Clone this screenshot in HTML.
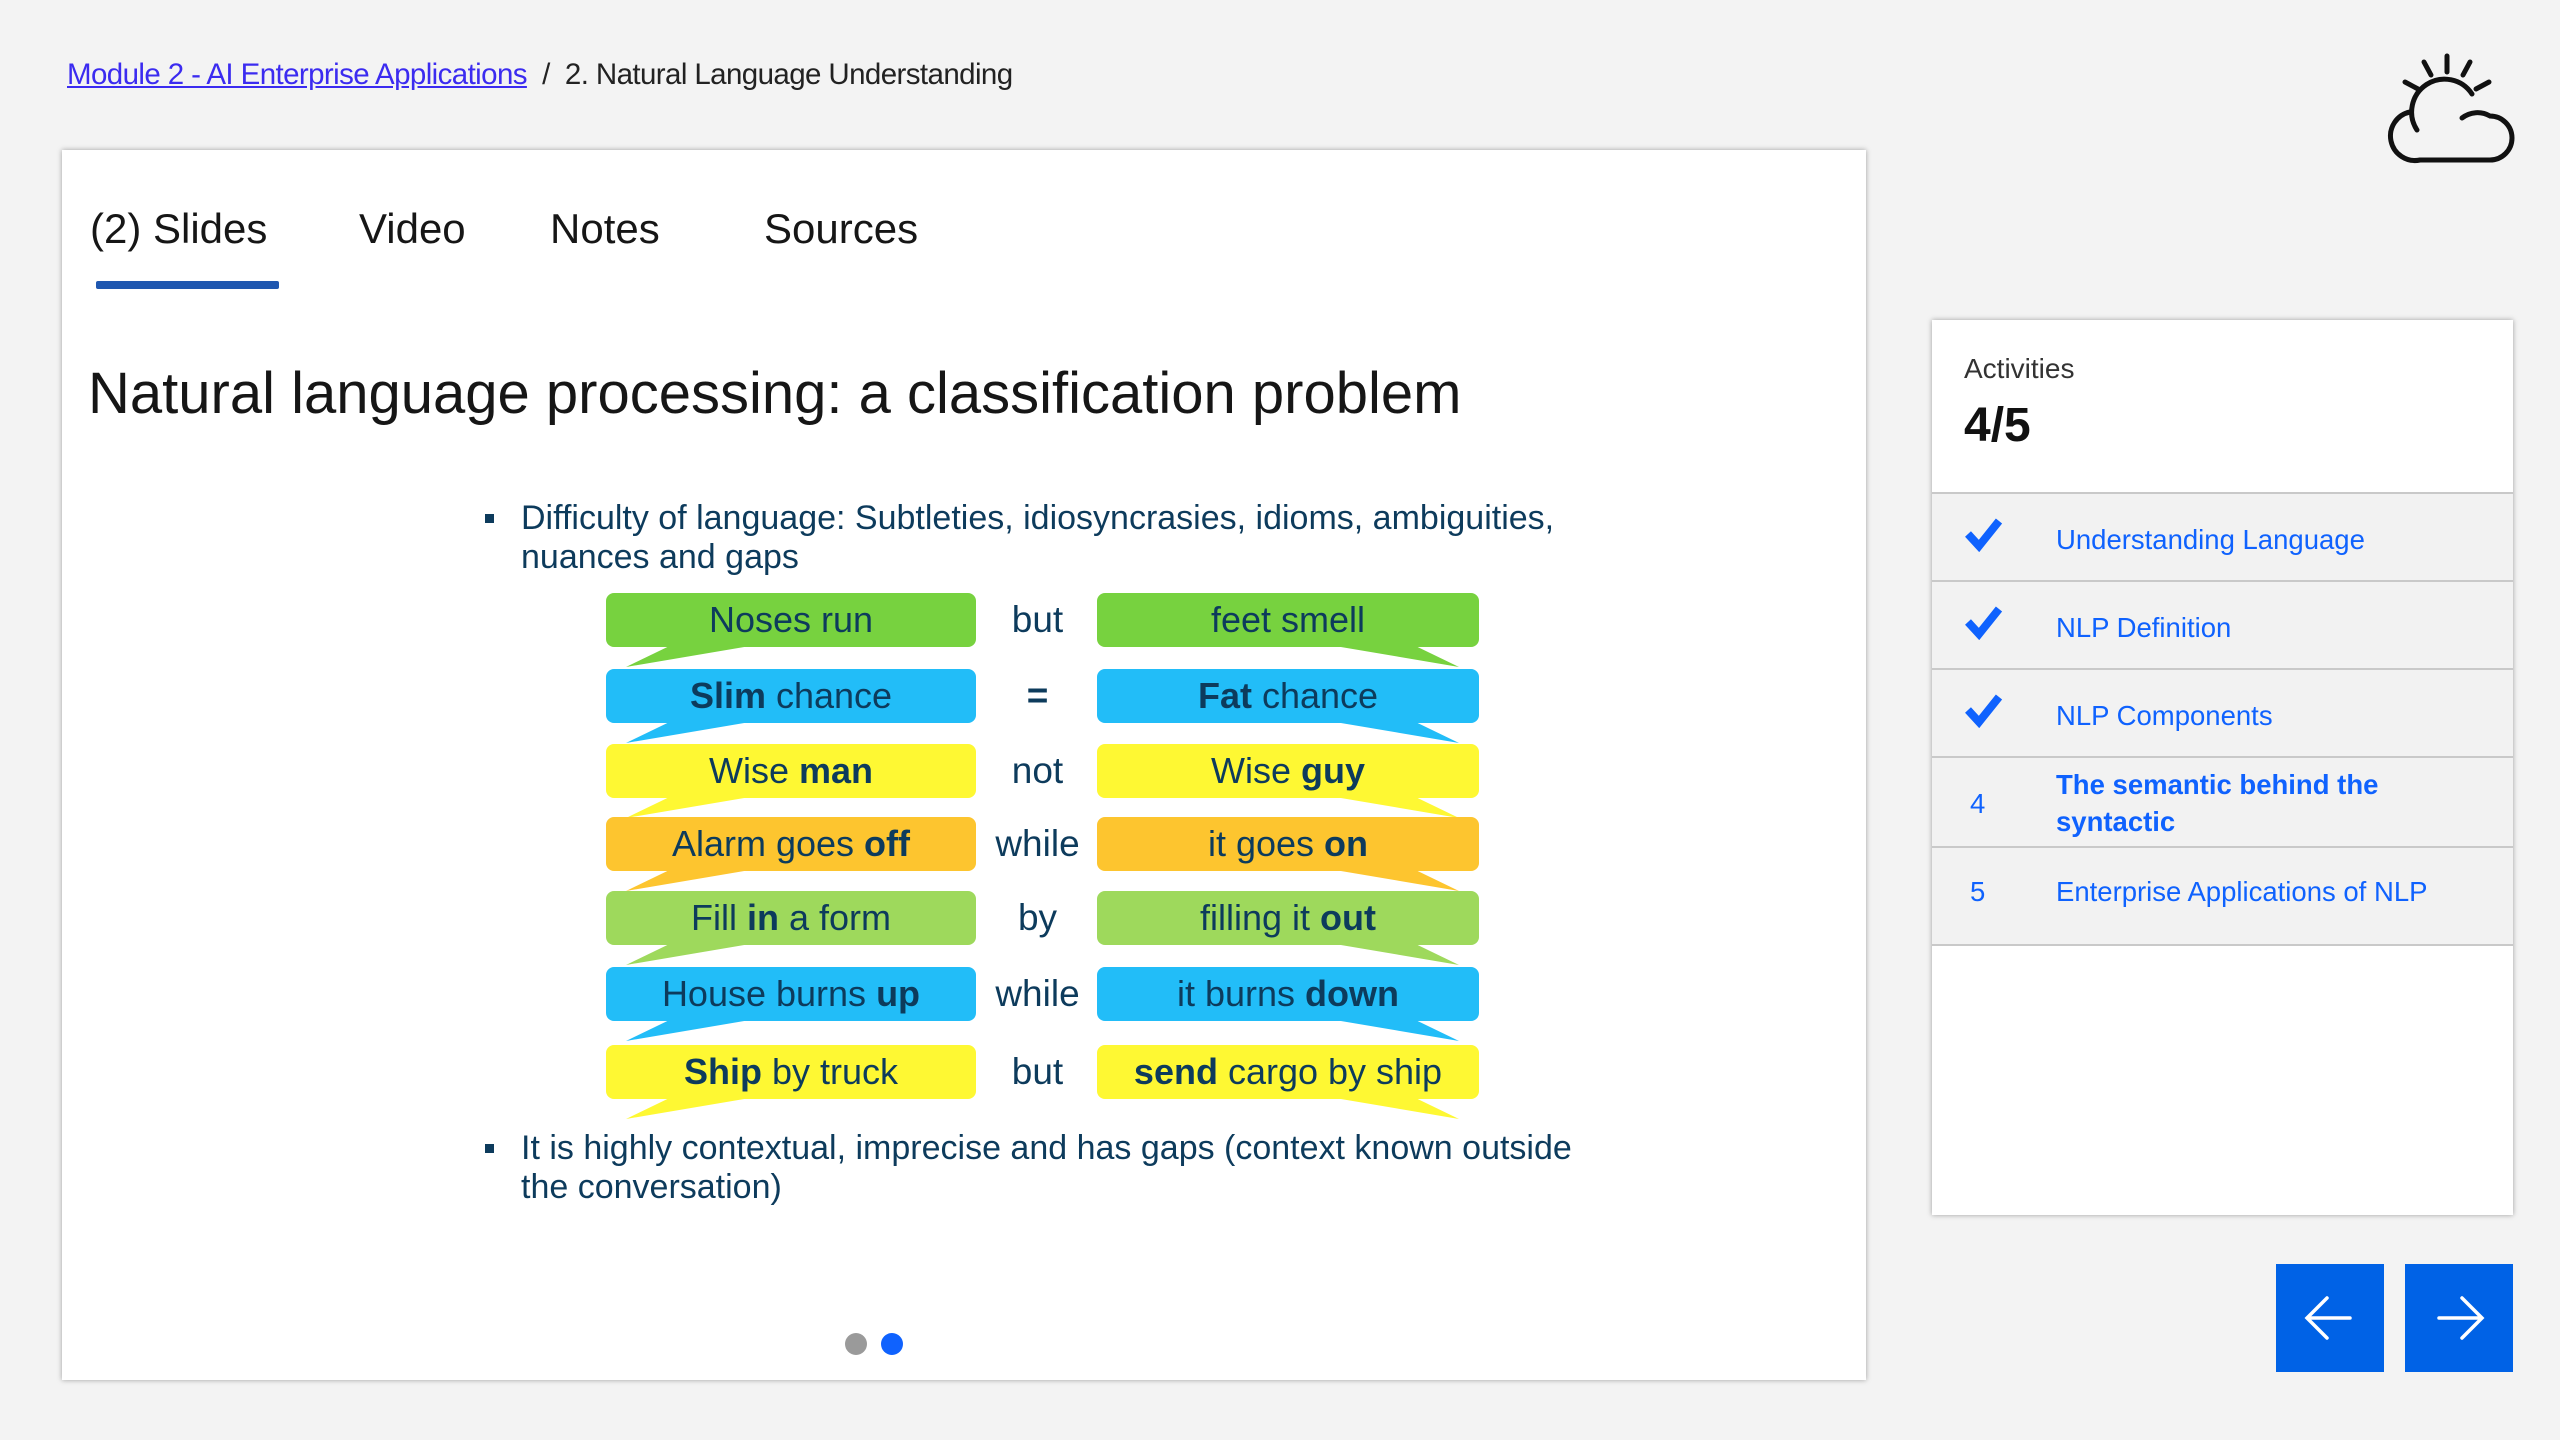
<!DOCTYPE html>
<html><head><meta charset="utf-8"><style>
*{margin:0;padding:0;box-sizing:border-box}
body{width:2560px;height:1440px;background:#f3f3f3;font-family:"Liberation Sans",sans-serif;position:relative;overflow:hidden}
.abs{position:absolute}
.bc{left:67px;top:58px;font-size:29.5px;color:#222;letter-spacing:-0.6px;white-space:nowrap}
.bc a{color:#3b2bf0;text-decoration:underline}
.card{left:62px;top:150px;width:1804px;height:1230px;background:#fff;box-shadow:0 0 5px rgba(0,0,0,.35)}
.tab{top:205px;font-size:42px;color:#161616}
.ul{left:96px;top:281px;width:183px;height:8px;background:#1f57b0;border-radius:2px}
.title{left:88px;top:360px;font-size:58px;color:#161616;white-space:nowrap}
.bul{font-size:34px;color:#0d3b5c;line-height:39px;left:521px;white-space:nowrap}
.bul:before{content:"";position:absolute;left:-36px;top:15px;width:9px;height:9px;background:#0d3b5c}
.b{position:absolute;height:54px;border-radius:8px;font-size:36px;color:#0d3b5c;text-align:center;line-height:54px;white-space:nowrap}
.b:after{content:"";position:absolute;bottom:-20px;width:130px;height:22px;background:var(--c)}
.L{left:606px;width:370px}
.L:after{left:20px;clip-path:polygon(0 100%,35% 0,100% 0)}
.R{left:1097px;width:382px}
.R:after{right:20px;clip-path:polygon(100% 100%,65% 0,0 0)}
.m{position:absolute;left:980px;width:115px;text-align:center;font-size:37px;color:#0d3b5c;line-height:54px}
.side{left:1932px;top:320px;width:581px;height:895px;background:#fff;box-shadow:0 0 5px rgba(0,0,0,.35)}
.row{position:absolute;left:0;width:581px;background:#f2f2f2;border-top:2px solid #c9c9c9}
.row .t{position:absolute;left:124px;font-size:27.5px;color:#0f62fe}
.row .n{position:absolute;left:38px;font-size:27.5px;color:#0f62fe}
.btn{top:1264px;width:108px;height:108px;background:#0062e6}
</style></head><body>
<div class="abs bc"><a>Module 2 - AI Enterprise Applications</a> &nbsp;/ &nbsp;2. Natural Language Understanding</div>
<svg class="abs" style="left:2380px;top:50px" width="135" height="115" viewBox="0 0 135 115">
<g stroke="#111" stroke-width="5" fill="none" stroke-linecap="round">
<line x1="67" y1="6" x2="67" y2="22"/><line x1="44" y1="12" x2="51" y2="25"/><line x1="90" y1="12" x2="83" y2="25"/>
<line x1="25" y1="32" x2="38" y2="39"/><line x1="109" y1="32" x2="96" y2="39"/>
<path d="M37 80 A30 30 0 0 1 92 44"/>
<path d="M30 62 A22 22 0 0 0 40 110 L110 110 A22 22 0 0 0 110 66 A25 25 0 0 0 82 68"/>
</g></svg>
<div class="abs card"></div>
<div class="abs tab" style="left:90px">(2) Slides</div>
<div class="abs tab" style="left:359px">Video</div>
<div class="abs tab" style="left:550px">Notes</div>
<div class="abs tab" style="left:764px">Sources</div>
<div class="abs ul"></div>
<div class="abs title">Natural language processing: a classification problem</div>
<div class="abs bul" style="top:499px">Difficulty of language: Subtleties, idiosyncrasies, idioms, ambiguities,<br>nuances and gaps</div>

<div class="b L" style="top:593px;background:#77d23f;--c:#77d23f">Noses run</div><div class="m" style="top:593px">but</div><div class="b R" style="top:593px;background:#77d23f;--c:#77d23f">feet smell</div>
<div class="b L" style="top:669px;background:#22bdf8;--c:#22bdf8"><b>Slim</b> chance</div><div class="m" style="top:669px"><b>=</b></div><div class="b R" style="top:669px;background:#22bdf8;--c:#22bdf8"><b>Fat</b> chance</div>
<div class="b L" style="top:744px;background:#fef833;--c:#fef833">Wise <b>man</b></div><div class="m" style="top:744px">not</div><div class="b R" style="top:744px;background:#fef833;--c:#fef833">Wise <b>guy</b></div>
<div class="b L" style="top:817px;background:#fdc52f;--c:#fdc52f">Alarm goes <b>off</b></div><div class="m" style="top:817px">while</div><div class="b R" style="top:817px;background:#fdc52f;--c:#fdc52f">it goes <b>on</b></div>
<div class="b L" style="top:891px;background:#9ed95c;--c:#9ed95c">Fill <b>in</b> a form</div><div class="m" style="top:891px">by</div><div class="b R" style="top:891px;background:#9ed95c;--c:#9ed95c">filling it <b>out</b></div>
<div class="b L" style="top:967px;background:#22bdf8;--c:#22bdf8">House burns <b>up</b></div><div class="m" style="top:967px">while</div><div class="b R" style="top:967px;background:#22bdf8;--c:#22bdf8">it burns <b>down</b></div>
<div class="b L" style="top:1045px;background:#fef833;--c:#fef833"><b>Ship</b> by truck</div><div class="m" style="top:1045px">but</div><div class="b R" style="top:1045px;background:#fef833;--c:#fef833"><b>send</b> cargo by ship</div>

<div class="abs bul" style="top:1129px">It is highly contextual, imprecise and has gaps (context known outside<br>the conversation)</div>
<div class="abs" style="left:845px;top:1333px;width:22px;height:22px;border-radius:50%;background:#9a9a9a"></div>
<div class="abs" style="left:881px;top:1333px;width:22px;height:22px;border-radius:50%;background:#0f62fe"></div>

<div class="abs side">
<div class="abs" style="left:32px;top:33px;font-size:28px;color:#333">Activities</div>
<div class="abs" style="left:32px;top:78px;font-size:48px;font-weight:bold;color:#111">4/5</div>
<div class="row" style="top:172px;height:88px"><svg class="abs" style="left:32px;top:22px" width="40" height="36"><path d="M4 18 L15 30 L35 5" stroke="#0f62fe" stroke-width="8" fill="none"/></svg><div class="t" style="top:30px">Understanding Language</div></div>
<div class="row" style="top:260px;height:88px"><svg class="abs" style="left:32px;top:22px" width="40" height="36"><path d="M4 18 L15 30 L35 5" stroke="#0f62fe" stroke-width="8" fill="none"/></svg><div class="t" style="top:30px">NLP Definition</div></div>
<div class="row" style="top:348px;height:88px"><svg class="abs" style="left:32px;top:22px" width="40" height="36"><path d="M4 18 L15 30 L35 5" stroke="#0f62fe" stroke-width="8" fill="none"/></svg><div class="t" style="top:30px">NLP Components</div></div>
<div class="row" style="top:436px;height:90px"><div class="n" style="top:30px">4</div><div class="t" style="top:8px;font-weight:bold;line-height:37px">The semantic behind the<br>syntactic</div></div>
<div class="row" style="top:526px;height:100px;border-bottom:2px solid #c9c9c9"><div class="n" style="top:28px">5</div><div class="t" style="top:28px">Enterprise Applications of NLP</div></div>
</div>
<div class="abs btn" style="left:2276px"><svg width="108" height="108"><path d="M32 54 H74 M51 34 L31 54 L51 74" stroke="#fff" stroke-width="3.5" fill="none" stroke-linecap="round"/></svg></div>
<div class="abs btn" style="left:2405px"><svg width="108" height="108"><path d="M34 54 H76 M57 34 L77 54 L57 74" stroke="#fff" stroke-width="3.5" fill="none" stroke-linecap="round"/></svg></div>
</body></html>
